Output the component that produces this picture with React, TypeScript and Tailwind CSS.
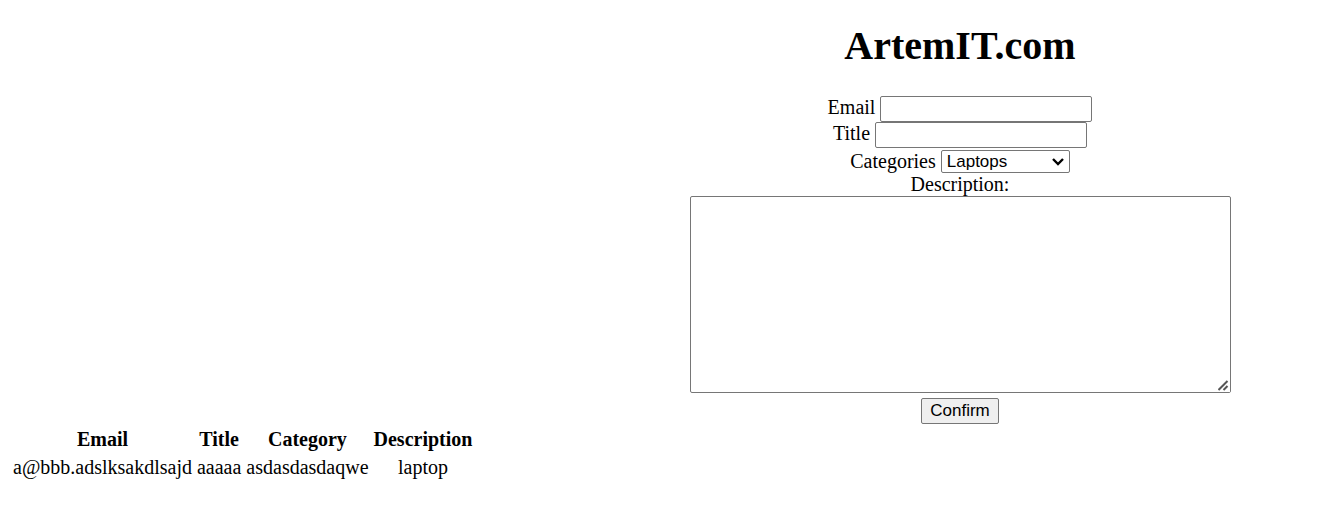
import React from "react";

const rows = [
  { email: "a@bbb.adslksakdlsajd", title: "aaaaa", category: "asdasdasdaqwe", description: "laptop" },
];

const field =
  "h-[26px] w-[212px] rounded-[2px] border border-[#767676] bg-white px-1 text-[17px] font-['Liberation_Sans',Arial,sans-serif]";

export default function App() {
  return (
    <main className="bg-white px-[9px] pt-[23px] font-['Liberation_Serif','Times_New_Roman',serif] text-[20px] leading-[23px] text-black">
      <form className="ml-auto flex w-[726px] max-w-full flex-col items-center" onSubmit={(e) => e.preventDefault()}>
        <h1 className="mb-[27px] text-[40px] leading-[46px] font-bold">ArtemIT.com</h1>
        <div className="flex items-start gap-[5px]">
          <label htmlFor="email">Email</label>
          <input id="email" type="text" className={field} />
        </div>
        <div className="flex items-start gap-[5px]">
          <label htmlFor="title">Title</label>
          <input id="title" type="text" className={field} />
        </div>
        <div className="mt-[2px] flex items-start gap-[5px]">
          <label htmlFor="category">Categories</label>
          <div className="relative flex">
            <select
              id="category"
              className="h-[23px] w-[129px] appearance-none rounded-[2px] border border-[#767676] bg-white pl-[5px] font-['Liberation_Sans',Arial,sans-serif] text-[17px] leading-5"
            >
              <option>Laptops</option>
            </select>
            <svg
              className="pointer-events-none absolute top-2 right-[6px] h-2 w-3"
              viewBox="0 0 12 8"
              fill="none"
              stroke="#000"
              strokeWidth="2.4"
              aria-hidden="true"
            >
              <path d="M1 1 6 6 11 1" />
            </svg>
          </div>
        </div>
        <label htmlFor="description">Description:</label>
        <div className="relative mb-[5px] flex">
          <textarea
            id="description"
            className="h-[197px] w-[541px] resize rounded-[2px] border border-[#767676] bg-white p-[3px] font-['Liberation_Mono',monospace] text-[17px] [&::-webkit-resizer]:bg-white"
          />
          <svg
            className="pointer-events-none absolute right-[2px] bottom-[2px] h-[11px] w-[11px]"
            viewBox="0 0 11 11"
            fill="none"
            stroke="#555"
            strokeWidth="2"
            aria-hidden="true"
          >
            <path d="M0.500 10 9.500 1M5.500 10 9.500 6" />
          </svg>
        </div>
        <button
          type="submit"
          className="h-[26px] w-[78px] rounded-[2px] border border-[#767676] bg-[#efefef] font-['Liberation_Sans',Arial,sans-serif] text-[17px] leading-5"
        >
          Confirm
        </button>
      </form>
      <table className="border-separate border-spacing-[3px] text-center">
        <thead>
          <tr>
            <th className="p-px">Email</th>
            <th className="p-px">Title</th>
            <th className="p-px">Category</th>
            <th className="p-px">Description</th>
          </tr>
        </thead>
        <tbody>
          {rows.map((r) => (
            <tr key={r.email}>
              <td className="p-px">{r.email}</td>
              <td className="p-px">{r.title}</td>
              <td className="p-px">{r.category}</td>
              <td className="p-px">{r.description}</td>
            </tr>
          ))}
        </tbody>
      </table>
    </main>
  );
}
